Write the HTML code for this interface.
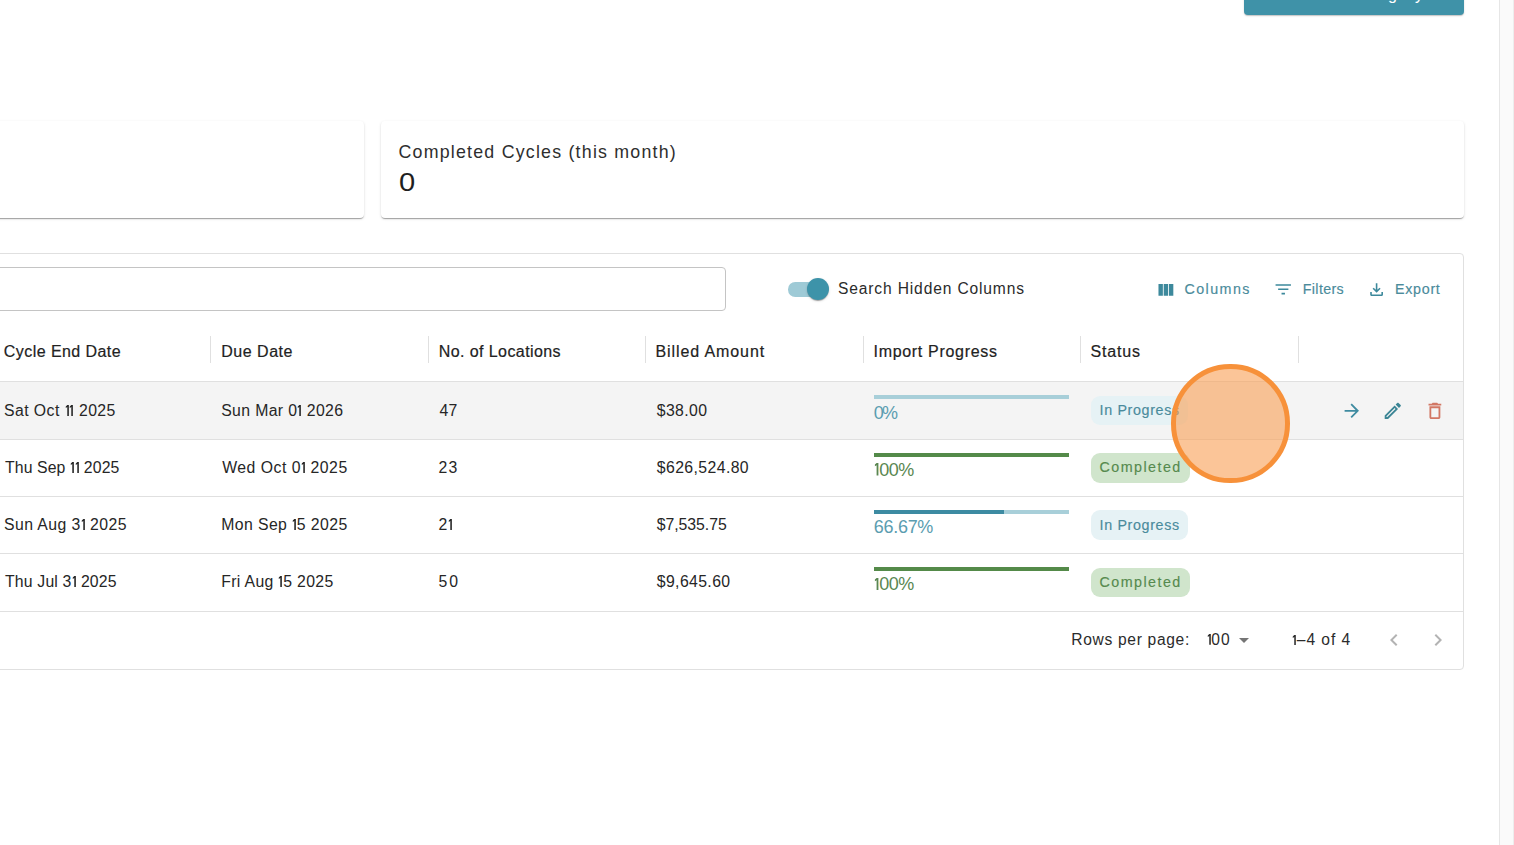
<!DOCTYPE html>
<html><head><meta charset="utf-8"><style>
html,body{margin:0;padding:0;width:1514px;height:845px;overflow:hidden;background:#fff;}
body{position:relative;font-family:"Liberation Sans",sans-serif;}
.t{position:absolute;white-space:nowrap;}
.box{position:absolute;}
.ic{position:absolute;}
.one{width:0.3em;height:0.69em;fill:currentColor;vertical-align:baseline;display:inline-block}
</style></head><body>
<!-- top button -->
<div class="box" style="left:1244px;top:-30px;width:220px;height:44.5px;background:#3f92a8;border-radius:4px;box-shadow:0 1px 1px rgba(0,0,0,.18),0 1px 3px rgba(0,0,0,.08)"></div>
<div class="t" style="left:1388px;top:-13.8px;font-size:16px;line-height:18px;color:#fff">g</div><div class="t" style="left:1415px;top:-13.8px;font-size:16px;line-height:18px;color:#fff">y</div>
<!-- cards -->
<div class="box" style="left:-720px;top:121px;width:1084px;height:97px;background:#fff;border-radius:4px;box-shadow:0 2px 1px -1px rgba(0,0,0,.2),0 1px 1px 0 rgba(0,0,0,.14),0 1px 3px 0 rgba(0,0,0,.12)"></div>
<div class="box" style="left:381px;top:121px;width:1083px;height:97px;background:#fff;border-radius:4px;box-shadow:0 2px 1px -1px rgba(0,0,0,.2),0 1px 1px 0 rgba(0,0,0,.14),0 1px 3px 0 rgba(0,0,0,.12)"></div>
<div class="box" style="left:-20px;top:253px;width:1484px;height:417px;border:1px solid #e0e0e0;border-radius:4px;box-sizing:border-box"></div><div class="box" style="left:0;top:382px;width:1463px;height:57px;background:#f4f4f4"></div><div class="box" style="left:0;top:381px;width:1463px;height:1px;background:#e0e0e0"></div><div class="box" style="left:0;top:439px;width:1463px;height:1px;background:#e0e0e0"></div><div class="box" style="left:0;top:496px;width:1463px;height:1px;background:#e0e0e0"></div><div class="box" style="left:0;top:553px;width:1463px;height:1px;background:#e0e0e0"></div><div class="box" style="left:0;top:611px;width:1463px;height:1px;background:#e0e0e0"></div><div class="box" style="left:210px;top:336px;width:1px;height:27px;background:#e0e0e0"></div><div class="box" style="left:428px;top:336px;width:1px;height:27px;background:#e0e0e0"></div><div class="box" style="left:645px;top:336px;width:1px;height:27px;background:#e0e0e0"></div><div class="box" style="left:863px;top:336px;width:1px;height:27px;background:#e0e0e0"></div><div class="box" style="left:1080px;top:336px;width:1px;height:27px;background:#e0e0e0"></div><div class="box" style="left:1298px;top:336px;width:1px;height:27px;background:#e0e0e0"></div><div class="box" style="left:874px;top:395px;width:195px;height:4px;background:#a8cfd9"></div><div class="box" style="left:874px;top:453px;width:195px;height:4px;background:#548a49"></div><div class="box" style="left:874px;top:453px;width:195.0px;height:4px;background:#548a49"></div><div class="box" style="left:874px;top:510px;width:195px;height:4px;background:#a8cfd9"></div><div class="box" style="left:874px;top:510px;width:130.0px;height:4px;background:#3d8ba2"></div><div class="box" style="left:874px;top:567px;width:195px;height:4px;background:#548a49"></div><div class="box" style="left:874px;top:567px;width:195.0px;height:4px;background:#548a49"></div><div class="box" style="left:1091px;top:395.9px;width:97px;height:29.6px;border-radius:9px;background:#e6f2f5"></div><div class="box" style="left:1091px;top:453.1px;width:99px;height:29.6px;border-radius:9px;background:#d0e5cc"></div><div class="box" style="left:1091px;top:510.3px;width:97px;height:29.6px;border-radius:9px;background:#e6f2f5"></div><div class="box" style="left:1091px;top:567.5px;width:99px;height:29.6px;border-radius:9px;background:#d0e5cc"></div>
<!-- search input -->
<div class="box" style="left:-20px;top:267px;width:746px;height:44px;border:1px solid #c4c4c4;border-radius:4px;box-sizing:border-box"></div>
<!-- switch -->
<div class="box" style="left:788px;top:282px;width:37.4px;height:14.5px;border-radius:7.25px;background:#9ecad6"></div>
<div class="box" style="left:807.1px;top:278.1px;width:21.8px;height:21.8px;border-radius:50%;background:#3d93a9;box-shadow:0 2px 1px -1px rgba(0,0,0,.2),0 1px 1px 0 rgba(0,0,0,.14),0 1px 3px 0 rgba(0,0,0,.12)"></div>
<div class="t" style="left:398.50px;top:142.05px;font-size:17.8px;line-height:21.36px;letter-spacing:1.221px;color:#2e2e2e;">Completed Cycles (this month)</div><div class="t" style="left:399.30px;top:167.12px;font-size:26.5px;line-height:31.8px;letter-spacing:0.000px;color:#1f1f1f;transform:scaleX(1.1);transform-origin:0 0;">0</div><div class="t" style="left:838.00px;top:280.13px;font-size:15.6px;line-height:18.72px;letter-spacing:0.850px;color:#2b2b2b;">Search Hidden Columns</div><div class="t" style="left:1184.50px;top:280.87px;font-size:14.3px;line-height:17.16px;letter-spacing:1.417px;color:#4a8b9b;-webkit-text-stroke:0.15px #4a8b9b;">Columns</div><div class="t" style="left:1302.80px;top:280.87px;font-size:14.3px;line-height:17.16px;letter-spacing:0.333px;color:#4a8b9b;-webkit-text-stroke:0.15px #4a8b9b;">Filters</div><div class="t" style="left:1395.00px;top:280.87px;font-size:14.3px;line-height:17.16px;letter-spacing:0.700px;color:#4a8b9b;-webkit-text-stroke:0.15px #4a8b9b;">Export</div><div class="t" style="left:3.80px;top:341.86px;font-size:16px;line-height:19.2px;letter-spacing:0.438px;color:#222;-webkit-text-stroke:0.2px #222;">Cycle End Date</div><div class="t" style="left:221.20px;top:341.86px;font-size:16px;line-height:19.2px;letter-spacing:0.529px;color:#222;-webkit-text-stroke:0.2px #222;">Due Date</div><div class="t" style="left:438.70px;top:341.86px;font-size:16px;line-height:19.2px;letter-spacing:0.420px;color:#222;-webkit-text-stroke:0.2px #222;">No. of Locations</div><div class="t" style="left:655.50px;top:341.86px;font-size:16px;line-height:19.2px;letter-spacing:0.900px;color:#222;-webkit-text-stroke:0.2px #222;">Billed Amount</div><div class="t" style="left:873.50px;top:341.86px;font-size:16px;line-height:19.2px;letter-spacing:0.686px;color:#222;-webkit-text-stroke:0.2px #222;">Import Progress</div><div class="t" style="left:1090.60px;top:341.86px;font-size:16px;line-height:19.2px;letter-spacing:0.820px;color:#222;-webkit-text-stroke:0.2px #222;">Status</div><div class="t" style="left:4.00px;top:401.55px;font-size:15.8px;line-height:18.96px;letter-spacing:0.442px;color:#262626;">Sat Oct <svg class="one" viewBox="0 0 30 69"><path d="M14.5 0H24.5V69H14.5V13L5 18.5V9Z"/></svg><svg class="one" viewBox="0 0 30 69"><path d="M14.5 0H24.5V69H14.5V13L5 18.5V9Z"/></svg> 2025</div><div class="t" style="left:221.20px;top:401.55px;font-size:15.8px;line-height:18.96px;letter-spacing:0.362px;color:#262626;">Sun Mar 0<svg class="one" viewBox="0 0 30 69"><path d="M14.5 0H24.5V69H14.5V13L5 18.5V9Z"/></svg> 2026</div><div class="t" style="left:439.50px;top:401.55px;font-size:15.8px;line-height:18.96px;letter-spacing:0.200px;color:#262626;">47</div><div class="t" style="left:656.80px;top:401.55px;font-size:15.8px;line-height:18.96px;letter-spacing:0.360px;color:#262626;">$38.00</div><div class="t" style="left:5.00px;top:458.75px;font-size:15.8px;line-height:18.96px;letter-spacing:0.100px;color:#262626;">Thu Sep <svg class="one" viewBox="0 0 30 69"><path d="M14.5 0H24.5V69H14.5V13L5 18.5V9Z"/></svg><svg class="one" viewBox="0 0 30 69"><path d="M14.5 0H24.5V69H14.5V13L5 18.5V9Z"/></svg> 2025</div><div class="t" style="left:222.20px;top:458.75px;font-size:15.8px;line-height:18.96px;letter-spacing:0.492px;color:#262626;">Wed Oct 0<svg class="one" viewBox="0 0 30 69"><path d="M14.5 0H24.5V69H14.5V13L5 18.5V9Z"/></svg> 2025</div><div class="t" style="left:438.50px;top:458.75px;font-size:15.8px;line-height:18.96px;letter-spacing:1.100px;color:#262626;">23</div><div class="t" style="left:656.80px;top:458.75px;font-size:15.8px;line-height:18.96px;letter-spacing:0.400px;color:#262626;">$626,524.80</div><div class="t" style="left:4.00px;top:515.95px;font-size:15.8px;line-height:18.96px;letter-spacing:0.408px;color:#262626;">Sun Aug 3<svg class="one" viewBox="0 0 30 69"><path d="M14.5 0H24.5V69H14.5V13L5 18.5V9Z"/></svg> 2025</div><div class="t" style="left:221.20px;top:515.95px;font-size:15.8px;line-height:18.96px;letter-spacing:0.415px;color:#262626;">Mon Sep <svg class="one" viewBox="0 0 30 69"><path d="M14.5 0H24.5V69H14.5V13L5 18.5V9Z"/></svg>5 2025</div><div class="t" style="left:438.50px;top:515.95px;font-size:15.8px;line-height:18.96px;letter-spacing:1.000px;color:#262626;">2<svg class="one" viewBox="0 0 30 69"><path d="M14.5 0H24.5V69H14.5V13L5 18.5V9Z"/></svg></div><div class="t" style="left:656.80px;top:515.95px;font-size:15.8px;line-height:18.96px;letter-spacing:-0.050px;color:#262626;">$7,535.75</div><div class="t" style="left:5.00px;top:573.15px;font-size:15.8px;line-height:18.96px;letter-spacing:0.177px;color:#262626;">Thu Jul 3<svg class="one" viewBox="0 0 30 69"><path d="M14.5 0H24.5V69H14.5V13L5 18.5V9Z"/></svg> 2025</div><div class="t" style="left:221.20px;top:573.15px;font-size:15.8px;line-height:18.96px;letter-spacing:0.354px;color:#262626;">Fri Aug <svg class="one" viewBox="0 0 30 69"><path d="M14.5 0H24.5V69H14.5V13L5 18.5V9Z"/></svg>5 2025</div><div class="t" style="left:438.50px;top:573.15px;font-size:15.8px;line-height:18.96px;letter-spacing:2.000px;color:#262626;">50</div><div class="t" style="left:656.80px;top:573.15px;font-size:15.8px;line-height:18.96px;letter-spacing:0.375px;color:#262626;">$9,645.60</div><div class="t" style="left:873.80px;top:402.56px;font-size:18px;line-height:21.6px;letter-spacing:-1.900px;color:#5b9db0;">0%</div><div class="t" style="left:873.80px;top:459.76px;font-size:18px;line-height:21.6px;letter-spacing:-0.450px;color:#5a8751;"><svg class="one" viewBox="0 0 30 69"><path d="M14.5 0H24.5V69H14.5V13L5 18.5V9Z"/></svg>00%</div><div class="t" style="left:873.80px;top:516.96px;font-size:18px;line-height:21.6px;letter-spacing:-0.300px;color:#5b9db0;">66.67%</div><div class="t" style="left:873.80px;top:574.16px;font-size:18px;line-height:21.6px;letter-spacing:-0.450px;color:#5a8751;"><svg class="one" viewBox="0 0 30 69"><path d="M14.5 0H24.5V69H14.5V13L5 18.5V9Z"/></svg>00%</div><div class="t" style="left:1099.60px;top:402.27px;font-size:14.3px;line-height:17.16px;letter-spacing:0.640px;color:#4a8b9c;-webkit-text-stroke:0.15px #4a8b9c;">In Progress</div><div class="t" style="left:1099.60px;top:459.47px;font-size:14.3px;line-height:17.16px;letter-spacing:1.438px;color:#568a4e;-webkit-text-stroke:0.15px #568a4e;">Completed</div><div class="t" style="left:1099.60px;top:516.67px;font-size:14.3px;line-height:17.16px;letter-spacing:0.640px;color:#4a8b9c;-webkit-text-stroke:0.15px #4a8b9c;">In Progress</div><div class="t" style="left:1099.60px;top:573.87px;font-size:14.3px;line-height:17.16px;letter-spacing:1.438px;color:#568a4e;-webkit-text-stroke:0.15px #568a4e;">Completed</div><div class="t" style="left:1071.20px;top:631.23px;font-size:15.6px;line-height:18.72px;letter-spacing:0.685px;color:#2b2b2b;">Rows per page:</div><div class="t" style="left:1206.70px;top:631.23px;font-size:15.6px;line-height:18.72px;letter-spacing:1.000px;color:#2b2b2b;"><svg class="one" viewBox="0 0 30 69"><path d="M14.5 0H24.5V69H14.5V13L5 18.5V9Z"/></svg>00</div><div class="t" style="left:1292.20px;top:631.33px;font-size:15.6px;line-height:18.72px;letter-spacing:0.917px;color:#2b2b2b;"><svg class="one" viewBox="0 0 30 69"><path d="M14.5 0H24.5V69H14.5V13L5 18.5V9Z"/></svg>–4 of 4</div>
<svg class="ic" style="left:1155.80px;top:280.00px;width:19.8px;height:19.8px" viewBox="0 0 24 24"><path fill="#3d899c" d="M14.67 5v14H9.33V5zm1 14H21V5h-5.33zm-7.34 0V5H3v14z"/></svg><svg class="ic" style="left:1272.75px;top:278.65px;width:20.5px;height:20.5px" viewBox="0 0 24 24"><path fill="#3d899c" d="M10 18h4v-2h-4v2zM3 6v2h18V6H3zm3 7h12v-2H6v2z"/></svg><svg class="ic" style="left:1367.10px;top:280.10px;width:19.2px;height:19.2px" viewBox="0 0 24 24"><path fill="#3d899c" d="M18 15v3H6v-3H4v3c0 1.1.9 2 2 2h12c1.1 0 2-.9 2-2v-3h-2zm-1-4-1.41-1.41L13 12.17V4h-2v8.17L8.41 9.59 7 11l5 5 5-5z"/></svg><svg class="ic" style="left:1341.10px;top:400.25px;width:21.6px;height:21.6px" viewBox="0 0 24 24"><path fill="#3e8ba0" d="M12 4l-1.41 1.41L16.17 11H4v2h12.17l-5.58 5.59L12 20l8-8z"/></svg><svg class="ic" style="left:1382.20px;top:400.20px;width:21.6px;height:21.6px" viewBox="0 0 24 24"><path fill="#3b8595" d="m14.06 9.02.92.92L5.92 19H5v-.92l9.06-9.06M17.66 3c-.25 0-.51.1-.7.29l-1.83 1.83 3.75 3.75 1.83-1.83a.996.996 0 0 0 0-1.41l-2.34-2.34c-.2-.2-.45-.29-.71-.29zm-3.6 3.19L3 17.25V21h3.75L17.81 9.94l-3.75-3.75z"/></svg><svg class="ic" style="left:1424.10px;top:399.95px;width:21.8px;height:21.8px" viewBox="0 0 24 24"><path fill="#d27764" d="M16 9v10H8V9h8m-1.5-6h-5l-1 1H5v2h14V4h-3.5l-1-1zM18 7H6v12c0 1.1.9 2 2 2h8c1.1 0 2-.9 2-2V7z"/></svg><svg class="ic" style="left:1382.25px;top:627.65px;width:24px;height:24px" viewBox="0 0 24 24"><path fill="#b3b3b3" d="M15.41 16.59L10.83 12l4.58-4.59L14 6l-6 6 6 6 1.41-1.41z"/></svg><svg class="ic" style="left:1426.15px;top:627.65px;width:24px;height:24px" viewBox="0 0 24 24"><path fill="#b3b3b3" d="M8.59 16.59L13.17 12 8.59 7.41 10 6l6 6-6 6-1.41-1.41z"/></svg><svg class="ic" style="left:1232.10px;top:628.15px;width:24px;height:24px" viewBox="0 0 24 24"><path fill="#757575" d="M7 10l5 5 5-5z"/></svg>
<!-- scrollbar -->
<div class="box" style="left:1499px;top:0;width:15px;height:845px;background:#fafafa;border-left:1px solid #e6e6e6;border-right:1px solid #ededed;box-sizing:border-box"></div>
<!-- orange highlight -->
<div class="box" style="left:1171.2px;top:364.2px;width:118.4px;height:118.4px;border-radius:50%;box-sizing:border-box;border:5.3px solid #f7913a;background:rgba(248,159,84,0.6)"></div>
</body></html>
